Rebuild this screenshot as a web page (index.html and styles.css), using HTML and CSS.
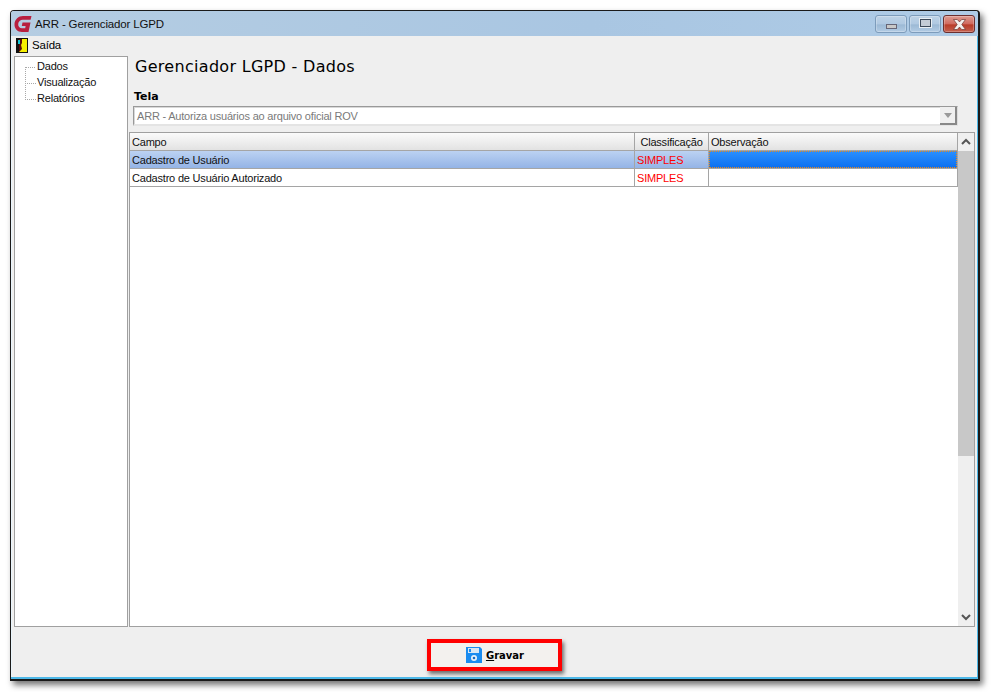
FILE: index.html
```html
<!DOCTYPE html>
<html lang="pt">
<head>
<meta charset="utf-8">
<title>ARR - Gerenciador LGPD</title>
<link rel="stylesheet" href="styles.css">
</head>
<body>
<div class="window">
  <div class="titlebar">
    <svg class="logo" width="18" height="18" viewBox="0 0 18 18"><path d="M17.500 1H9C4.500 1 .8 4.500.5 9c-.3 4.500 3 8 7.500 8h6.500l2-9.500H8.500L7.800 11h3.800l-.4 2.200H8c-2.400 0-4-1.800-3.800-4.200C4.400 6.700 6.300 4.800 8.800 4.800h7.800z" fill="#b81f3f"/></svg>
    <span class="title">ARR - Gerenciador LGPD</span>
    <div class="controls">
      <div class="ctl ctl-min"><span class="glyph-min"></span></div>
      <div class="ctl ctl-max"><span class="glyph-max"></span></div>
      <div class="ctl ctl-close">
        <svg width="15" height="11" viewBox="0 0 15 11"><path d="M1.500 .5h3.800l2.200 2.400L9.700.5h3.800L9.800 5.500l3.700 5H9.700L7.500 8.100 5.300 10.500H1.500l3.700-5z" fill="#f4f0ee" stroke="#6e3a34" stroke-width=".7"/></svg>
      </div>
    </div>
  </div>
  <div class="menubar">
    <svg class="exit" width="12" height="15" viewBox="0 0 12 15"><rect width="12" height="15" fill="#111"/><rect x="3" y="1" width="8" height="13" fill="#f5ef00"/><path d="M3 1h3v4l-1 2 1 4-3 3z" fill="#5a0a0a"/><rect x="2" y="2" width="2" height="4" fill="#10c8d8"/></svg>
    <span>Saída</span>
  </div>
  <div class="content">
    <div class="tree">
      <div class="tree-item">Dados</div>
      <div class="tree-item">Visualização</div>
      <div class="tree-item">Relatórios</div>
    </div>
    <div class="main">
      <h1 class="heading">Gerenciador LGPD - Dados</h1>
      <div class="label">Tela</div>
      <div class="combo">
        <span class="combo-text">ARR - Autoriza usuários ao arquivo oficial ROV</span>
        <div class="combo-btn"><span class="combo-arrow"></span></div>
      </div>
      <div class="grid">
        <div class="table">
          <div class="row head">
            <div class="cell c1">Campo</div>
            <div class="cell c2 center">Classificação</div>
            <div class="cell c3">Observação</div>
          </div>
          <div class="row selected">
            <div class="cell c1">Cadastro de Usuário</div>
            <div class="cell c2 red">SIMPLES</div>
            <div class="cell c3 active"></div>
          </div>
          <div class="row">
            <div class="cell c1">Cadastro de Usuário Autorizado</div>
            <div class="cell c2 red">SIMPLES</div>
            <div class="cell c3"></div>
          </div>
        </div>
        <div class="scrollbar">
          <svg class="arrow" width="16" height="18" viewBox="0 0 16 18"><path d="M4 11l4-4 4 4" fill="none" stroke="#555" stroke-width="2"/></svg>
          <div class="thumb"></div>
          <div class="track"></div>
          <svg class="arrow" width="16" height="18" viewBox="0 0 16 18"><path d="M4 7l4 4 4-4" fill="none" stroke="#555" stroke-width="2"/></svg>
        </div>
      </div>
    </div>
  </div>
  <div class="footer">
    <button class="save">
      <svg width="16" height="16" viewBox="0 0 16 16"><path d="M0 0h14l2 2v14H0z" fill="#1a8cf0"/><rect x="2" y="1" width="11" height="5" fill="#d8e8f5"/><rect x="3" y="2" width="2" height="3" fill="#1a8cf0"/><circle cx="8" cy="11" r="3" fill="#e8f2fa"/><circle cx="8" cy="11" r="1.300" fill="#1a6cc0"/></svg>
      <span class="save-text"><u>G</u>ravar</span>
    </button>
  </div>
</div>
</body>
</html>
```
FILE: styles.css
```css
* { box-sizing: border-box; }
html, body { margin: 0; padding: 0; height: 100%; background: #fff; overflow: hidden; }
body { padding: 10px 0 0 10px; font-family: "Liberation Sans", Arial, sans-serif; font-size: 11px; letter-spacing: -.2px; color: #000; }

.window {
  width: 970px;
  height: 671px;
  display: flex;
  flex-direction: column;
  background: #efefef;
  border: 1px solid #1a1a1a;
  border-radius: 4px 4px 0 0;
  border-right-width: 2px;
  border-bottom-width: 2px;
  box-shadow: 3px 4px 6px rgba(0,0,0,.55), inset -1px -2px 0 #4db8e8, inset 1px 0 0 #e8f4fb;
}

.titlebar {
  height: 25px;
  flex: none;
  display: flex;
  align-items: center;
  padding: 0 3px 0 3px;
  background: linear-gradient(90deg, #b5cde2, #a9c6e2 60%, #aecbe6);
  border-radius: 3px 3px 0 0;
}
.logo { margin-right: 3px; flex: none; }
.title { font-size: 11.500px; letter-spacing: -.15px; color: #111; }
.controls { margin-left: auto; display: flex; gap: 2px; align-self: flex-start; margin-top: 4px; }
.ctl {
  height: 18px;
  width: 32px;
  display: flex;
  align-items: center;
  justify-content: center;
  border: 1px solid #7d9cbb;
  border-radius: 3px;
  background: linear-gradient(#bdd2e6, #b0c9e2 50%, #9cb9d5 55%, #b2cbe4);
  box-shadow: inset 0 0 0 1px rgba(255,255,255,.25);
}
.ctl-close { border-color: #6b2f2f; background: linear-gradient(#dd9c92, #d0695e 50%, #b93c28 55%, #c4604f); }
.glyph-min { width: 11px; height: 5px; margin-top: 5px; background: #c8c8c8; border: 1px solid #667; }
.glyph-max { width: 11px; height: 8px; margin-top: -2px; border: 1px solid #3d4a5a; background: #c4ccd6; box-shadow: 0 0 0 1px #e8eef3; }

.menubar {
  height: 18px;
  flex: none;
  display: flex;
  align-items: center;
  gap: 4px;
  padding-left: 5px;
  font-size: 11.500px;
}

.content { flex: 1; display: flex; padding: 2px 3px 0 3px; min-height: 0; gap: 1px; }

.tree {
  width: 114px;
  flex: none;
  background: #fff;
  border: 1px solid #a0a0a0;
  padding: 2px 0 0 22px;
}
.tree-item {
  height: 16px;
  line-height: 15px;
  position: relative;
  color: #111;
}
.tree-item::before {
  content: "";
  position: absolute;
  left: -12px;
  top: -8px;
  height: 16px;
  width: 10px;
  border-left: 1px dotted #a8a8a8;
  border-bottom: 1px dotted #a8a8a8;
}
.tree-item:first-child::before { top: 7px; height: 1px; border-left: 0; }

.main { flex: 1; display: flex; flex-direction: column; min-width: 0; }
.heading { margin: 0; padding: 1px 0 0 6px; height: 34px; font: 400 16px/20px "DejaVu Sans", sans-serif; letter-spacing: .3px; color: #000; }
.label { padding-left: 5px; height: 16px; font: 700 11px/14px "DejaVu Sans", sans-serif; letter-spacing: 0; }
.combo {
  margin: 0 17px 0 4px;
  height: 20px;
  display: flex;
  align-items: center;
  background: #fff;
  border: 1px solid #999;
  border-right-color: #ddd;
  border-bottom: 2px solid #e4e4e4;
  box-shadow: inset 1px 1px 0 #d8d8d8;
  color: #7a7a7a;
  padding-left: 3px;
}
.combo-text { flex: 1; }
.combo-btn {
  width: 17px; height: 18px; margin-top: 1px;
  display: flex; align-items: center; justify-content: center;
  background: #efefef;
  border-right: 2px solid #888; border-bottom: 2px solid #888;
}
.combo-arrow { width: 0; height: 0; border: 4px solid transparent; border-top: 5px solid #999; margin-top: 4px; }

.grid { flex: 1; margin-top: 6px; display: flex; background: #fff; border: 1px solid #a0a0a0; min-height: 0; }
.table { flex: 1; min-width: 0; }
.row { display: flex; height: 18px; border-bottom: 1px solid #a5a5a5; border-right: 1px solid #a5a5a5; }
.cell { padding-left: 2px; line-height: 18px; white-space: nowrap; overflow: hidden; border-right: 1px solid #a5a5a5; color: #111; }
.cell:last-child { border-right: 0; }
.c1 { width: 505px; }
.c2 { width: 74px; padding-left: 2px; }
.c3 { flex: 1; }
.center { text-align: center; padding: 0; }
.head { background: linear-gradient(#fbfbfb, #e2e2e2); }
.selected { background: linear-gradient(#bcd2f2, #94b4e6); }
.cell.red { color: #f00; }
.active { background: linear-gradient(#2b90ff, #0a6ff0); outline: 1px dotted #e88a20; outline-offset: -1px; }
.scrollbar { width: 16px; flex: none; display: flex; flex-direction: column; background: #efefef; }
.arrow { display: block; flex: none; }
.thumb { height: 305px; background: #c8c8c8; flex: none; }
.track { flex: 1; }

.footer { height: 52px; flex: none; display: flex; justify-content: center; padding-top: 12px; }
.save {
  width: 135px; height: 32px;
  display: flex; align-items: center; justify-content: center; gap: 4px;
  background: #f3f1ee;
  border: 4px solid #f00;
  box-shadow: 2px 3px 4px rgba(0,0,0,.55);
  color: #000;
  padding: 0 0 0 1px;
}
.save-text { font: 700 10px "DejaVu Sans", sans-serif; letter-spacing: 0; }
```
